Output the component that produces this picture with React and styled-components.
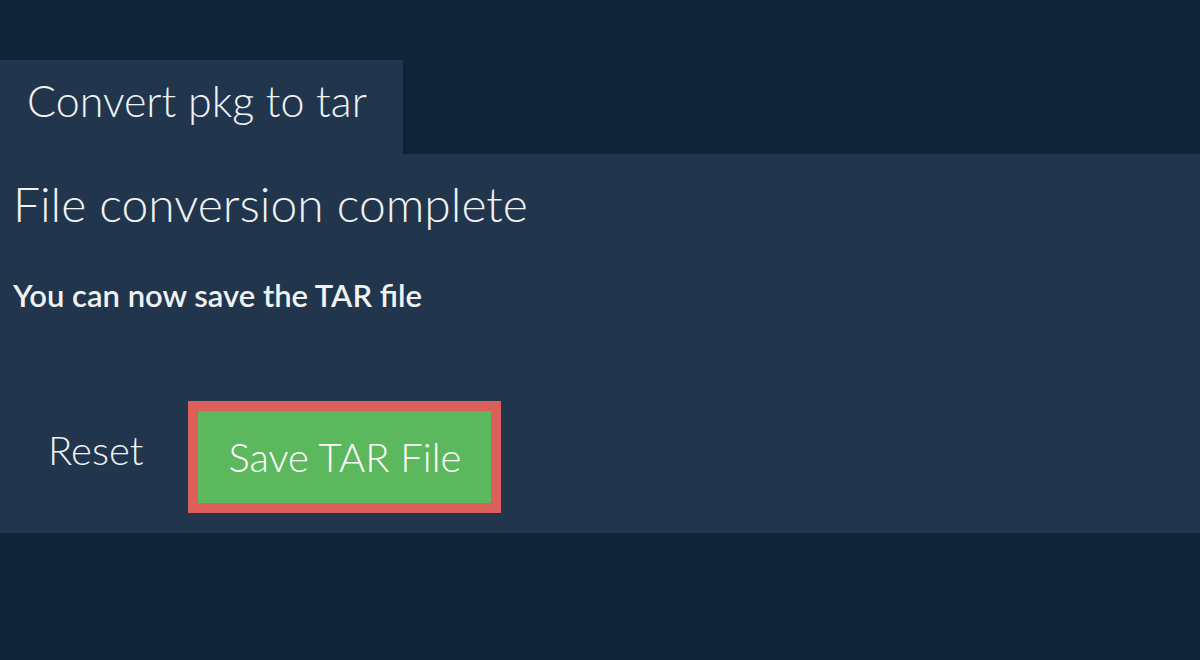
import React from 'react';
import styled, { createGlobalStyle } from 'styled-components';

const GlobalStyle = createGlobalStyle`
  html, body {
    margin: 0;
    padding: 0;
    background: #0f2439;
    font-family: Lato, "Open Sans", sans-serif;
    color: #f0f2f4;
  }
`;

const Page = styled.div`
  padding-top: 60px;
  min-height: 600px;
`;

const Tab = styled.div`
  display: inline-block;
  background: #21364d;
  height: 94px;
  box-sizing: border-box;
  padding: 17px 36px 0 27px;
  font-size: 43px;
  font-weight: 300;
  line-height: 48px;
`;

const Panel = styled.section`
  background: #21364d;
  height: 379px;
  box-sizing: border-box;
  padding: 20px 13px 0;
`;

const Heading = styled.h2`
  margin: 0;
  font-size: 48px;
  font-weight: 300;
  line-height: 60px;
`;

const Message = styled.p`
  margin: 44px 0 0;
  font-size: 31px;
  font-weight: 600;
  line-height: 34px;
`;

const Actions = styled.div`
  display: flex;
  align-items: center;
  gap: 45px;
  margin-top: 89px;
  padding-left: 35px;
`;

const TextButton = styled.button`
  background: none;
  border: none;
  padding: 0;
  color: #f0f2f4;
  font-family: inherit;
  font-size: 40px;
  font-weight: 300;
  margin-bottom: 14px;
`;

const SaveButton = styled.button`
  background: #5cb85c;
  border: 10px solid #dc5f5b;
  width: 313px;
  height: 112px;
  color: #fff;
  font-family: inherit;
  font-size: 40px;
  font-weight: 300;
  padding: 0;
`;

export default function App() {
  return (
    <Page>
      <GlobalStyle />
      <Tab>Convert pkg to tar</Tab>
      <Panel>
        <Heading>File conversion complete</Heading>
        <Message>You can now save the TAR file</Message>
        <Actions>
          <TextButton>Reset</TextButton>
          <SaveButton>Save TAR File</SaveButton>
        </Actions>
      </Panel>
    </Page>
  );
}
